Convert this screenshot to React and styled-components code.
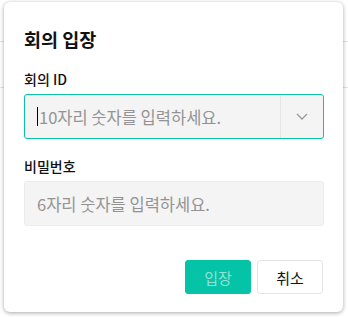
import React from "react";
import styled, { createGlobalStyle } from "styled-components";

const GlobalStyle = createGlobalStyle`
  body {
    margin: 0;
    background: #fff;
    font-family: "Noto Sans CJK KR", "Noto Sans", sans-serif;
  }
`;

const Page = styled.div`
  position: relative;
  width: 348px;
  height: 317px;
  overflow: hidden;
`;

const BackRow = styled.div`
  height: ${(p) => p.$h}px;
  border-bottom: 1px solid #e2e2e2;
  box-sizing: border-box;
`;

const Modal = styled.div`
  position: absolute;
  left: 4px;
  top: 2px;
  width: 339px;
  height: 310px;
  box-sizing: border-box;
  padding: 24px 19px 0 20px;
  background: #fff;
  border-radius: 6px;
  box-shadow: 0 1px 4px rgba(0, 0, 0, 0.35);
  display: flex;
  flex-direction: column;
`;

const Title = styled.h2`
  margin: 0;
  font-size: 18.5px;
  line-height: 26px;
  font-weight: 700;
  color: #111;
`;

const Label = styled.div`
  margin-top: ${(p) => p.$gap}px;
  margin-bottom: 5px;
  font-size: 14px;
  line-height: 20px;
  font-weight: 500;
  color: #111;
`;

const Field = styled.div`
  display: flex;
  align-items: stretch;
  height: 45px;
  box-sizing: border-box;
  background: #f4f4f4;
  border: 1px solid ${(p) => (p.$focused ? "#0bc4a6" : "#ececec")};
  border-radius: 3px;
`;

const Value = styled.div`
  flex: 1;
  display: flex;
  align-items: center;
  padding-left: 12px;
  font-size: 16.5px;
  color: #939393;
`;

const Caret = styled.span`
  width: 1px;
  height: 19px;
  background: #000;
  margin-right: 1px;
`;

const Toggle = styled.div`
  width: 42px;
  border-left: 1px solid #e4e4e4;
  display: flex;
  align-items: center;
  justify-content: center;
`;

const Actions = styled.div`
  margin-top: 34px;
  display: flex;
  justify-content: flex-end;
  gap: 6px;
  padding-right: 1px;
`;

const Button = styled.button`
  width: 66px;
  height: 34px;
  box-sizing: border-box;
  border-radius: 3px;
  font-family: inherit;
  font-size: 15px;
  padding: 0;
  cursor: pointer;
  background: ${(p) => (p.$primary ? "#05c3a6" : "#fff")};
  color: ${(p) => (p.$primary ? "#8fe3d5" : "#111")};
  border: 1px solid ${(p) => (p.$primary ? "#05c3a6" : "#e4e4e4")};
`;

const Chevron = () => (
  <svg width="12" height="7" viewBox="0 0 12 7" fill="none">
    <path d="M1 1l5 5 5-5" stroke="#9a9a9a" strokeWidth="1.3" />
  </svg>
);

export default function App() {
  return (
    <Page>
      <GlobalStyle />
      <BackRow $h={42} />
      <BackRow $h={46} />
      <Modal>
        <Title>회의 입장</Title>
        <Label $gap={17}>회의 ID</Label>
        <Field $focused>
          <Value>
            <Caret />
            10자리 숫자를 입력하세요.
          </Value>
          <Toggle>
            <Chevron />
          </Toggle>
        </Field>
        <Label $gap={17}>비밀번호</Label>
        <Field>
          <Value>6자리 숫자를 입력하세요.</Value>
        </Field>
        <Actions>
          <Button $primary>입장</Button>
          <Button>취소</Button>
        </Actions>
      </Modal>
    </Page>
  );
}
